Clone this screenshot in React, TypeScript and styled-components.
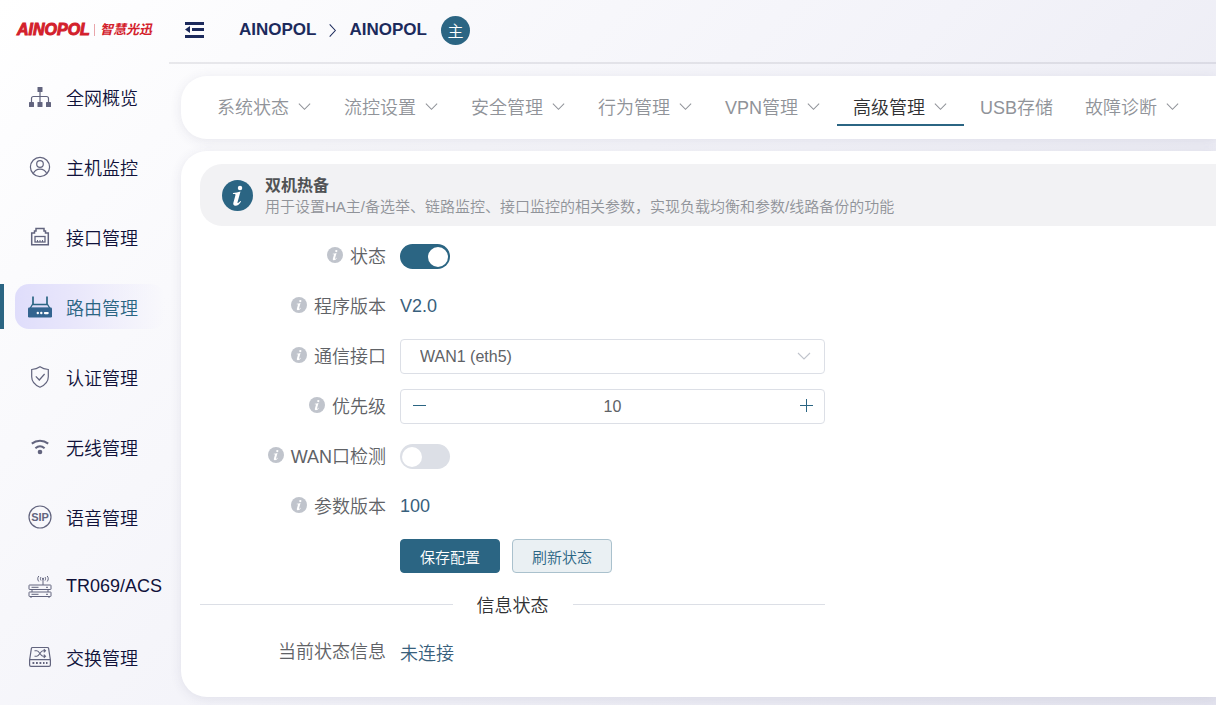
import React, { useState } from "react";
import styled, { createGlobalStyle, css } from "styled-components";

const primary = "#2b6583";
const ink = "#1c2a5c";
const iconInk = "#62647e";
const line = "#dcdfe6";

const GlobalStyle = createGlobalStyle`
  *, *::before, *::after { box-sizing: border-box; }
  body {
    margin: 0;
    overflow-x: hidden;
    background: linear-gradient(135deg, #ffffff 0%, #fbfbfd 15%, #f3f3f9 50%, #e4e4ef 100%);
    color: #303133;
    font-family: "Liberation Sans", "Noto Sans CJK SC", sans-serif;
    font-size: 18px;
    font-weight: 350;
  }
  button, input, select { font: inherit; color: inherit; }
`;

const Page = styled.div`
  display: flex;
  min-height: 100vh;
`;

const Sidebar = styled.aside`
  flex: 0 0 169px;
  display: flex;
  flex-direction: column;
`;

const Logo = styled.a`
  display: flex;
  align-items: center;
  height: 60px;
  padding-left: 17px;
  color: #d3202b;
  text-decoration: none;
  white-space: nowrap;
`;

const LogoName = styled.span`
  font-size: 16px;
  font-weight: 700;
  font-style: italic;
  -webkit-text-stroke: 1px #d3202b;
`;

const LogoTagline = styled.span`
  margin-left: 4px;
  padding-left: 5px;
  border-left: 1px solid #e9a5aa;
  font-size: 13px;
  line-height: 12px;
  font-weight: 700;
  font-style: italic;
`;

const SideNav = styled.nav`
  display: flex;
  flex-direction: column;
  gap: 25px;
  padding-top: 14px;
`;

const SideRow = styled.div<{ $active?: boolean }>`
  display: flex;
  padding-right: 4px;
  border-left: 4px solid ${(p) => (p.$active ? primary : "transparent")};
`;

const SideLink = styled.a<{ $active?: boolean }>`
  flex: 1;
  display: flex;
  align-items: center;
  gap: 14px;
  height: 45px;
  margin-left: 11px;
  padding-left: 13px;
  border-radius: 14px;
  color: ${(p) => (p.$active ? primary : "#10123a")};
  background: ${(p) =>
    p.$active ? "linear-gradient(90deg, #dfddfb, #e9e7fb 40%, rgba(245, 244, 253, 0))" : "none"};
  text-decoration: none;
  white-space: nowrap;

  svg { flex: 0 0 24px; }
`;

const Main = styled.main`
  flex: 1;
  min-width: 0;
`;

const Header = styled.header`
  display: flex;
  align-items: center;
  height: 64px;
  padding: 0 16px 2px;
  border-bottom: 2px solid rgba(60, 60, 80, 0.1);
`;

const IconButton = styled.button`
  display: flex;
  padding: 0;
  border: 0;
  background: none;
  color: ${ink};
`;

const Crumbs = styled.nav`
  display: flex;
  align-items: center;
  margin-left: 34px;
  gap: 9px;
  font-size: 17px;
  font-weight: 700;

  a { color: ${ink}; text-decoration: none; }
`;

const RoleBadge = styled.span`
  display: flex;
  align-items: center;
  justify-content: center;
  width: 29px;
  height: 29px;
  margin-left: 14px;
  border-radius: 50%;
  background: ${primary};
  color: #fff;
  font-size: 16px;
`;

const Panels = styled.div`
  display: flex;
  flex-direction: column;
  gap: 12px;
  padding: 12px 0 8px 12px;
`;

const panel = css`
  background: #fff;
  border-radius: 26px 0 0 26px;
  box-shadow: 0 2px 12px rgba(60, 60, 100, 0.1);
`;

const Tabs = styled.nav`
  ${panel}
  display: flex;
  padding: 12px 0 13px 20px;
`;

const Tab = styled.a<{ $active?: boolean }>`
  display: flex;
  align-items: center;
  gap: 8px;
  height: 38px;
  padding: 0 16px;
  border-bottom: 2px solid ${(p) => (p.$active ? primary : "transparent")};
  color: ${(p) => (p.$active ? "#303133" : "#909399")};
  text-decoration: none;
  white-space: nowrap;

  svg { color: #909399; }
`;

const Content = styled.section`
  ${panel}
  padding: 13px 0 28px 19px;
`;

const Banner = styled.div`
  display: flex;
  align-items: center;
  gap: 12px;
  height: 62px;
  padding-left: 22px;
  border-radius: 22px 0 0 22px;
  background: #f2f2f4;
`;

const BannerBody = styled.div`
  padding-top: 2px;
`;

const BannerTitle = styled.h1`
  margin: 0;
  color: #505255;
  font-size: 16px;
  line-height: 21px;
  font-weight: 700;
`;

const BannerText = styled.p`
  margin: 0;
  color: #909399;
  font-size: 15px;
  line-height: 21px;
`;

const Form = styled.form`
  display: flex;
  flex-direction: column;
  gap: 15px;
  max-width: 625px;
  margin-top: 13px;
`;

const Row = styled.div`
  display: grid;
  grid-template-columns: 186px 1fr;
  column-gap: 14px;
  align-items: center;
  height: 35px;
  color: #606266;
`;

const Label = styled.label`
  display: flex;
  align-items: center;
  justify-content: flex-end;
  gap: 7px;
  padding-bottom: 3px;
  white-space: nowrap;
`;

const Value = styled.output`
  color: #38607c;
`;

const Switch = styled.input`
  appearance: none;
  display: flex;
  align-items: center;
  width: 50px;
  height: 25px;
  margin: 0;
  padding: 0 2px;
  border-radius: 13px;
  background: ${line};

  &::before {
    content: "";
    width: 20px;
    height: 20px;
    border-radius: 50%;
    background: #fff;
  }

  &:checked {
    justify-content: flex-end;
    background: ${primary};
  }
`;

const SelectBox = styled.div`
  position: relative;
  height: 35px;

  svg {
    position: absolute;
    top: 9px;
    right: 13px;
    color: #c0c4cc;
    pointer-events: none;
  }
`;

const Select = styled.select`
  appearance: none;
  width: 100%;
  height: 100%;
  padding: 0 40px 0 19px;
  border: 1px solid ${line};
  border-radius: 4px;
  background: #fff;
  color: #606266;
  font-size: 16px;
`;

const Stepper = styled.div`
  display: flex;
  height: 35px;
  border: 1px solid ${line};
  border-radius: 4px;
`;

const StepButton = styled.button`
  display: flex;
  align-items: center;
  justify-content: center;
  flex: 0 0 36px;
  padding: 0 0 2px;
  border: 0;
  background: none;
  color: ${primary};
`;

const StepInput = styled.input`
  flex: 1;
  min-width: 0;
  padding: 0;
  border: 0;
  background: none;
  color: #606266;
  font-size: 16px;
  text-align: center;
`;

const Actions = styled.div`
  grid-column: 2;
  align-self: start;
  display: flex;
  gap: 12px;
`;

const Button = styled.button<{ $plain?: boolean }>`
  width: 100px;
  height: 34px;
  padding: 0;
  border: 1px solid ${(p) => (p.$plain ? "#aac1cd" : primary)};
  border-radius: 4px;
  background: ${(p) => (p.$plain ? "#eaf0f3" : primary)};
  color: ${(p) => (p.$plain ? primary : "#fff")};
  font-size: 15px;
`;

const Divider = styled.h2`
  display: flex;
  align-items: center;
  gap: 24px;
  height: 30px;
  margin: 0;
  font-size: 18px;
  font-weight: 350;

  &::before, &::after {
    content: "";
    flex: 1;
    border-top: 1px solid ${line};
  }
`;

function Chevron({ size = 15, right = false, color = "currentColor" }: { size?: number; right?: boolean; color?: string }) {
  return (
    <svg width={size} height={size} viewBox="0 0 16 16" fill="none" stroke={color} strokeWidth="1.1" aria-hidden="true">
      <path d={right ? "M5 1.500l6 6.500-6 6.500" : "M2 5l6 6 6-6"} />
    </svg>
  );
}

function InfoIcon({ size = 16, color = "#c0c4cc" }: { size?: number; color?: string }) {
  return (
    <svg width={size} height={size} viewBox="0 0 32 32" aria-hidden="true">
      <circle cx="16" cy="16" r="16" fill={color} />
      <circle cx="18.600" cy="8.200" r="2.300" fill="#fff" />
      <path
        d="M11.500 13.400c2.600-.3 5-.9 7.600-1.600l-3 10.800c-.3 1.200.1 1.500.8 1 .8-.5 1.400-1.200 2-2l.8.500c-1.600 2.900-3.600 4.400-5.800 4.400-2 0-2.700-1.300-2.100-3.300l2-7.300c.2-.9 0-1.400-.9-1.400h-1.700z"
        fill="#fff"
      />
    </svg>
  );
}

const svgProps = { width: 24, height: 24, viewBox: "0 0 24 24", fill: "none", stroke: iconInk, strokeWidth: 1.2, "aria-hidden": true } as const;

const icons: Record<string, React.ReactElement> = {
  topology: (
    <svg {...svgProps}>
      <g fill={iconInk} stroke="none">
        <rect x="9.500" y="2" width="5" height="5" rx=".6" />
        <rect x="1" y="17" width="5" height="5" rx=".6" />
        <rect x="9.500" y="17" width="5" height="5" rx=".6" />
        <rect x="18" y="17" width="5" height="5" rx=".6" />
      </g>
      <path d="M12 7v10M3.500 17v-3.500c0-1.200.8-2 2-2h13c1.200 0 2 .8 2 2V17" />
    </svg>
  ),
  host: (
    <svg {...svgProps}>
      <circle cx="12" cy="12" r="9.600" />
      <circle cx="12" cy="9" r="3.300" />
      <path d="M5.200 18.700c1.400-3 3.900-4.500 6.800-4.500s5.400 1.500 6.800 4.500" />
    </svg>
  ),
  port: (
    <svg {...svgProps} strokeWidth="1.500">
      <path d="M8 6V3.500h8V6h1.500v2H20.300v11.800H3.700V8h2.800V6z" />
      <rect x="7" y="11.500" width="10" height="5.500" strokeWidth="1.300" />
      <path d="M9.500 17v-2M12 17v-2M14.500 17v-2" strokeWidth="1" />
    </svg>
  ),
  router: (
    <svg {...svgProps} stroke={primary}>
      <path d="M5 1.500V10M19 1.500V10" strokeWidth="1.700" />
      <path d="M4.500 9.500h15l2.500 4H2z" fill="#dfddf8" strokeWidth="1.300" />
      <rect x="0" y="12.500" width="24" height="10" rx="1.200" fill="#33648f" stroke="none" />
      <circle cx="9.800" cy="18" r="1.200" fill="#fff" stroke="none" />
      <circle cx="13.300" cy="18" r="1.200" fill="#fff" stroke="none" />
      <rect x="15.800" y="17" width="5" height="2.200" rx="1.100" fill="#fff" stroke="none" />
    </svg>
  ),
  shield: (
    <svg {...svgProps}>
      <path d="M12 1.800c2.400 1.700 5 2.500 8.300 2.700v7.200c0 4.800-3 8.200-8.300 10.500-5.300-2.300-8.300-5.700-8.300-10.500V4.500C7 4.300 9.600 3.500 12 1.800z" />
      <path d="M7.800 11.300l3.500 3.700 5.300-6" />
    </svg>
  ),
  wifi: (
    <svg {...svgProps} strokeWidth="2">
      <path d="M3.800 8.600c4.800-3.800 11.600-3.800 16.400 0M7.400 13.200c2.800-2.300 6.400-2.300 9.200 0" />
      <circle cx="12" cy="17" r="2.300" fill={iconInk} stroke="none" />
    </svg>
  ),
  sip: (
    <svg {...svgProps}>
      <circle cx="12" cy="12" r="11" />
      <text x="12" y="16" textAnchor="middle" fontSize="11" fontWeight="700" fill={iconInk} stroke="none">SIP</text>
    </svg>
  ),
  acs: (
    <svg {...svgProps} strokeWidth="1">
      <rect x="1" y="10" width="22" height="4.500" rx=".5" />
      <rect x="1" y="17" width="22" height="4.500" rx=".5" />
      <path d="M4 14.500V17M20 14.500V17M3 21.500V23M21 21.500V23M15 10V3.500M3.500 12.300h7M3.500 19.300h7M18 12.300h2M18 19.300h2" />
      <path d="M13 5.500c-.8-1.200-.8-2.400 0-3.500M17 5.500c.8-1.200.8-2.400 0-3.500M10.800 6.500c-1.400-1.900-1.400-3.600 0-5.500M19.200 6.500c1.400-1.900 1.400-3.600 0-5.500" />
      <circle cx="15" cy="3.700" r="1" fill={iconInk} stroke="none" />
    </svg>
  ),
  exchange: (
    <svg {...svgProps}>
      <path d="M4.500 2.500h15c.7 0 1 .3 1.100.9L22.400 15v5c0 .9-.5 1.400-1.400 1.400H3c-.9 0-1.400-.5-1.400-1.400v-5L3.400 3.400c.1-.6.400-.9 1.100-.9zM1.800 14.700h20.400" />
      <path d="M4.500 18h1.800M8 18h1.800M11.500 18h1.800M15 18h1.500M18 18h1.500" strokeWidth="1.800" />
      <path d="M6.500 5.800h2.300c2.600 0 3.600 5.400 6.200 5.400h2.500M6.500 11.200h2.300c2.600 0 3.600-5.400 6.200-5.400h2.500M15.800 4.200l1.700 1.600-1.700 1.600M15.800 9.600l1.700 1.600-1.700 1.600" strokeWidth="1.100" />
    </svg>
  ),
};

const sideItems = [
  ["topology", "全网概览"],
  ["host", "主机监控"],
  ["port", "接口管理"],
  ["router", "路由管理"],
  ["shield", "认证管理"],
  ["wifi", "无线管理"],
  ["sip", "语音管理"],
  ["acs", "TR069/ACS"],
  ["exchange", "交换管理"],
];

const tabs = [
  { text: "系统状态", menu: true },
  { text: "流控设置", menu: true },
  { text: "安全管理", menu: true },
  { text: "行为管理", menu: true },
  { text: "VPN管理", menu: true },
  { text: "高级管理", menu: true },
  { text: "USB存储", menu: false },
  { text: "故障诊断", menu: true },
];

function Field({ id, label, children }: { id: string; label: string; children: React.ReactNode }) {
  return (
    <Row>
      <Label htmlFor={id}>
        <InfoIcon />
        {label}
      </Label>
      {children}
    </Row>
  );
}

export default function App() {
  const [enabled, setEnabled] = useState(true);
  const [wanCheck, setWanCheck] = useState(false);
  const [priority, setPriority] = useState(10);

  return (
    <>
      <GlobalStyle />
      <Page>
        <Sidebar>
          <Logo href="#">
            <LogoName>AINOPOL</LogoName>
            <LogoTagline>智慧光迅</LogoTagline>
          </Logo>
          <SideNav>
            {sideItems.map(([icon, text]) => {
              const active = icon === "router";
              return (
                <SideRow key={icon} $active={active}>
                  <SideLink href="#" $active={active}>
                    {icons[icon]}
                    {text}
                  </SideLink>
                </SideRow>
              );
            })}
          </SideNav>
        </Sidebar>

        <Main>
          <Header>
            <IconButton type="button" aria-label="收起菜单">
              <svg width="20" height="16" viewBox="0 0 20 16" fill="currentColor" aria-hidden="true">
                <path d="M0 0h19v3H0zM7 6h12v3H7zM0 13h19v3H0zM0 7.500L5 4v7z" />
              </svg>
            </IconButton>
            <Crumbs>
              <a href="#">AINOPOL</a>
              <Chevron right size={15} color={ink} />
              <a href="#">AINOPOL</a>
            </Crumbs>
            <RoleBadge>主</RoleBadge>
          </Header>

          <Panels>
            <Tabs>
              {tabs.map((t) => (
                <Tab key={t.text} href="#" $active={t.text === "高级管理"}>
                  {t.text}
                  {t.menu && <Chevron />}
                </Tab>
              ))}
            </Tabs>

            <Content>
              <Banner>
                <InfoIcon size={31} color={primary} />
                <BannerBody>
                  <BannerTitle>双机热备</BannerTitle>
                  <BannerText>用于设置HA主/备选举、链路监控、接口监控的相关参数，实现负载均衡和参数/线路备份的功能</BannerText>
                </BannerBody>
              </Banner>

              <Form onSubmit={(e) => e.preventDefault()}>
                <Field id="status" label="状态">
                  <Switch id="status" type="checkbox" checked={enabled} onChange={(e) => setEnabled(e.target.checked)} />
                </Field>
                <Field id="version" label="程序版本">
                  <Value id="version">V2.0</Value>
                </Field>
                <Field id="port" label="通信接口">
                  <SelectBox>
                    <Select id="port">
                      <option>WAN1 (eth5)</option>
                    </Select>
                    <Chevron size={16} />
                  </SelectBox>
                </Field>
                <Field id="priority" label="优先级">
                  <Stepper>
                    <StepButton type="button" aria-label="减少" onClick={() => setPriority(priority - 1)}>
                      <svg width="13" height="13" viewBox="0 0 13 13" stroke="currentColor" aria-hidden="true">
                        <path d="M0 6.500h13" />
                      </svg>
                    </StepButton>
                    <StepInput
                      id="priority"
                      inputMode="numeric"
                      value={priority}
                      onChange={(e) => setPriority(Number(e.target.value) || 0)}
                    />
                    <StepButton type="button" aria-label="增加" onClick={() => setPriority(priority + 1)}>
                      <svg width="13" height="13" viewBox="0 0 13 13" stroke="currentColor" aria-hidden="true">
                        <path d="M0 6.500h13M6.500 0v13" />
                      </svg>
                    </StepButton>
                  </Stepper>
                </Field>
                <Field id="wan" label="WAN口检测">
                  <Switch id="wan" type="checkbox" checked={wanCheck} onChange={(e) => setWanCheck(e.target.checked)} />
                </Field>
                <Field id="params" label="参数版本">
                  <Value id="params">100</Value>
                </Field>
                <Row>
                  <Actions>
                    <Button type="submit">保存配置</Button>
                    <Button type="button" $plain>刷新状态</Button>
                  </Actions>
                </Row>
                <Divider>信息状态</Divider>
                <Row>
                  <Label htmlFor="current">当前状态信息</Label>
                  <Value id="current">未连接</Value>
                </Row>
              </Form>
            </Content>
          </Panels>
        </Main>
      </Page>
    </>
  );
}
